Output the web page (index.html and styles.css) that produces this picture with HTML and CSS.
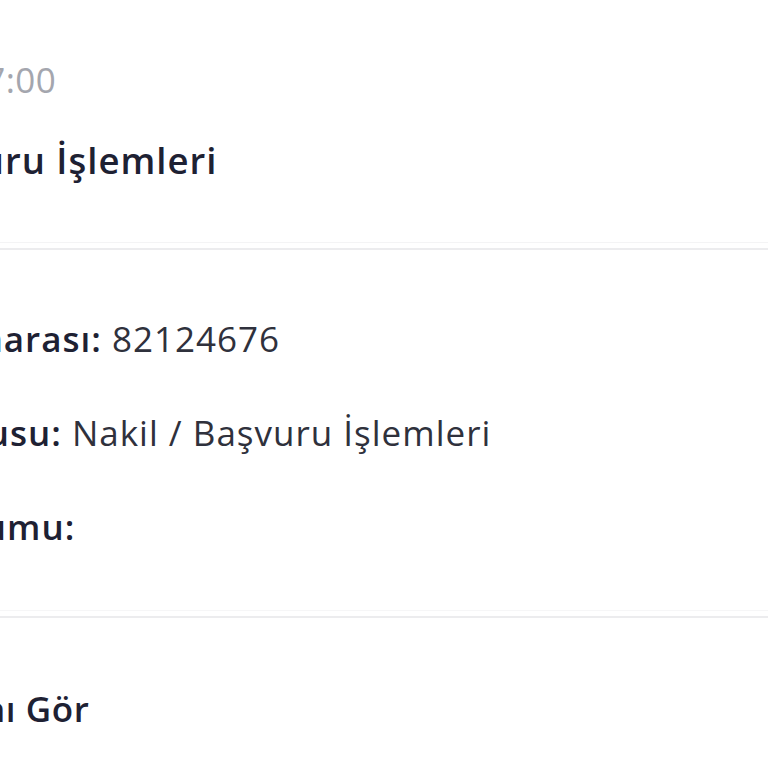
FILE: index.html
```html
<!DOCTYPE html>
<html lang="tr">
<head>
	<meta charset="utf-8">
	<meta name="viewport" content="width=device-width, initial-scale=1">
	<title>Başvuru Detayı</title>
	<link rel="stylesheet" href="styles.css">
</head>
<body>
<div class="card">
	<div class="card-head">
		<p class="date">14.03.2023, 17:00</p>
		<h2 class="title">Nakil / Başvuru İşlemleri</h2>
	</div>
	<div class="card-body">
		<p class="row"><b>Başvuru Numarası:</b> 82124676</p>
		<p class="row"><b>Başvuru Konusu:</b> Nakil / Başvuru İşlemleri</p>
		<p class="row"><b>Başvuru Durumu:</b></p>
	</div>
	<div class="card-foot">
		<a class="more" href="#">Talep Cevabını Gör</a>
	</div>
</div>
</body>
</html>
```
FILE: styles.css
```css
body{
	margin : 0;
	background : #fff;
	overflow : hidden;
	font-family : "Open Sans", "Noto Sans", sans-serif;
	letter-spacing : 1px;
}
.card{
	margin-left : -238px;
}
.card-head{
	padding-top : 58px;
	padding-bottom : 59px;
	border-bottom : 1px solid #f4f4f5;
}
.date{
	margin : 0;
	font-size : 35px;
	line-height : 44px;
	letter-spacing : 0.5px;
	color : #a4a6ae;
}
.title{
	margin : 35px 0 0;
	font-size : 36.5px;
	font-weight : 600;
	line-height : 46px;
	color : #1e2133;
}
.card-body{
	border-top : 2px solid #ececee;
	margin-top : 5px;
	padding : 66px 0 60px;
	border-bottom : 1px solid #f6f6f7;
}
.row{
	margin : 0 0 48px;
	font-size : 35px;
	line-height : 46px;
	color : #2f313c;
}
.row:last-child{
	margin-bottom : 0;
}
.row b{
	font-weight : 600;
	color : #1e2133;
}
.card-foot{
	border-top : 2px solid #ececee;
	margin-top : 5px;
	padding-top : 68px;
}
.more{
	font-size : 35px;
	font-weight : 600;
	line-height : 46px;
	letter-spacing : 0.6px;
	color : #1e2133;
	text-decoration : none;
}
```
